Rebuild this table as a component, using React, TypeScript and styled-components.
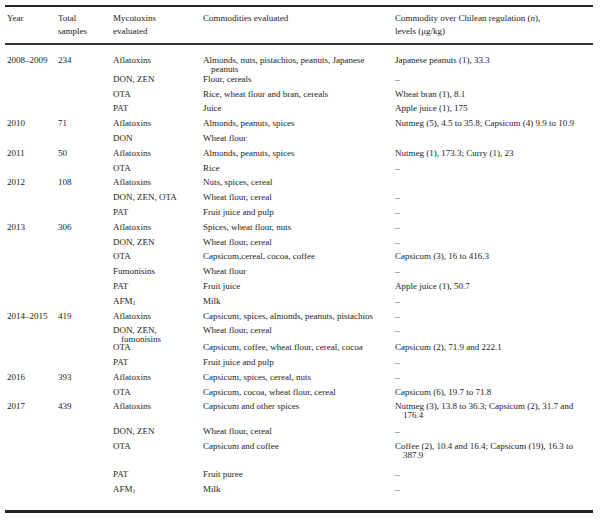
import React from "react";
import styled, { createGlobalStyle } from "styled-components";

const GlobalStyle = createGlobalStyle`
  html, body {
    margin: 0;
    padding: 0;
    background: #ffffff;
  }
  body {
    font-family: "Liberation Serif", "Times New Roman", serif;
    color: #1c1c1c;
  }
`;

const Page = styled.div`
  width: 600px;
  height: 522px;
  padding: 5px 7px 0 5px;
  box-sizing: border-box;
  overflow: hidden;
`;

const Table = styled.div`
  width: 588px;
  display: flex;
  flex-direction: column;
`;

const cols = "51px 55px 90px 192px 1fr";

const HeaderRow = styled.div`
  display: grid;
  grid-template-columns: ${cols};
  padding: 5px 0 6px;
  border-top: 2px solid #262626;
  border-bottom: 2px solid #333333;
  font-size: 9px;
  line-height: 12.5px;
`;

const HeadCell = styled.div`
  padding-left: 2px;
  white-space: nowrap;
`;

const Body = styled.div`
  display: flex;
  flex-direction: column;
  padding: 11px 0 11px;
  border-bottom: 3px solid #262626;
`;

const Row = styled.div<{ $h: number }>`
  display: grid;
  grid-template-columns: ${cols};
  height: ${(p) => p.$h}px;
  font-size: 9px;
  line-height: 8.6px;
`;

const Cell = styled.div`
  padding-left: 10px;
  text-indent: -8px;
  white-space: nowrap;
`;

const Sub = styled.sub`
  font-size: 6px;
  vertical-align: -1px;
  line-height: 0;
`;

type R = {
  year?: string;
  total?: string;
  myco: React.ReactNode;
  comm: React.ReactNode;
  over?: React.ReactNode;
  h?: number;
};

const P = 14.8;
const AFM = (
  <>
    AFM<Sub>1</Sub>
  </>
);

const rows: R[] = [
  {
    year: "2008–2009",
    total: "234",
    myco: "Aflatoxins",
    comm: (
      <>
        Almonds, nuts, pistachios, peanuts, Japanese
        <br />
        peanuts
      </>
    ),
    over: "Japanese peanuts (1), 33.3",
    h: P + 4,
  },
  { myco: "DON, ZEN", comm: "Flour, cereals", over: "–" },
  { myco: "OTA", comm: "Rice, wheat flour and bran, cereals", over: "Wheat bran (1), 8.1" },
  { myco: "PAT", comm: "Juice", over: "Apple juice (1), 175" },
  {
    year: "2010",
    total: "71",
    myco: "Aflatoxins",
    comm: "Almonds, peanuts, spices",
    over: "Nutmeg (5), 4.5 to 35.8; Capsicum (4) 9.9 to 10.9",
  },
  { myco: "DON", comm: "Wheat flour" },
  {
    year: "2011",
    total: "50",
    myco: "Aflatoxins",
    comm: "Almonds, peanuts, spices",
    over: "Nutmeg (1), 173.3; Curry (1), 23",
  },
  { myco: "OTA", comm: "Rice", over: "–" },
  { year: "2012", total: "108", myco: "Aflatoxins", comm: "Nuts, spices, cereal" },
  { myco: "DON, ZEN, OTA", comm: "Wheat flour, cereal", over: "–" },
  { myco: "PAT", comm: "Fruit juice and pulp", over: "–" },
  { year: "2013", total: "306", myco: "Aflatoxins", comm: "Spices, wheat flour, nuts", over: "–" },
  { myco: "DON, ZEN", comm: "Wheat flour, cereal", over: "–" },
  { myco: "OTA", comm: "Capsicum,cereal, cocoa, coffee", over: "Capsicum (3), 16 to 416.3" },
  { myco: "Fumonisins", comm: "Wheat flour", over: "–" },
  { myco: "PAT", comm: "Fruit juice", over: "Apple juice (1), 50.7" },
  { myco: AFM, comm: "Milk", over: "–" },
  {
    year: "2014–2015",
    total: "419",
    myco: "Aflatoxins",
    comm: "Capsicum, spices, almonds, peanuts, pistachios",
    over: "–",
  },
  {
    myco: (
      <>
        DON, ZEN,
        <br />
        fumonisins
      </>
    ),
    comm: "Wheat flour, cereal",
    over: "–",
    h: P + 2,
  },
  {
    myco: "OTA",
    comm: "Capsicum, coffee, wheat flour, cereal, cocoa",
    over: "Capsicum (2), 71.9 and 222.1",
  },
  { myco: "PAT", comm: "Fruit juice and pulp", over: "–" },
  { year: "2016", total: "393", myco: "Aflatoxins", comm: "Capsicum, spices, cereal, nuts", over: "–" },
  { myco: "OTA", comm: "Capsicum, cocoa, wheat flour, cereal", over: "Capsicum (6), 19.7 to 71.8" },
  {
    year: "2017",
    total: "439",
    myco: "Aflatoxins",
    comm: "Capsicum and other spices",
    over: (
      <>
        Nutmeg (3), 13.8 to 36.3; Capsicum (2), 31.7 and
        <br />
        176.4
      </>
    ),
    h: P + 10,
  },
  { myco: "DON, ZEN", comm: "Wheat flour, cereal", over: "–" },
  {
    myco: "OTA",
    comm: "Capsicum and coffee",
    over: (
      <>
        Coffee (2), 10.4 and 16.4; Capsicum (19), 16.3 to
        <br />
        387.9
      </>
    ),
    h: P + 13,
  },
  { myco: "PAT", comm: "Fruit puree", over: "–" },
  { myco: AFM, comm: "Milk", over: "–" },
];

export default function App() {
  return (
    <>
      <GlobalStyle />
      <Page>
        <Table>
          <HeaderRow>
            <HeadCell>Year</HeadCell>
            <HeadCell>
              Total
              <br />
              samples
            </HeadCell>
            <HeadCell>
              Mycotoxins
              <br />
              evaluated
            </HeadCell>
            <HeadCell>Commodities evaluated</HeadCell>
            <HeadCell>
              Commodity over Chilean regulation (<i>n</i>),
              <br />
              levels (μg/kg)
            </HeadCell>
          </HeaderRow>
          <Body>
            {rows.map((r, i) => (
              <Row key={i} $h={r.h ?? P}>
                <Cell>{r.year}</Cell>
                <Cell>{r.total}</Cell>
                <Cell>{r.myco}</Cell>
                <Cell>{r.comm}</Cell>
                <Cell>{r.over}</Cell>
              </Row>
            ))}
          </Body>
        </Table>
      </Page>
    </>
  );
}
